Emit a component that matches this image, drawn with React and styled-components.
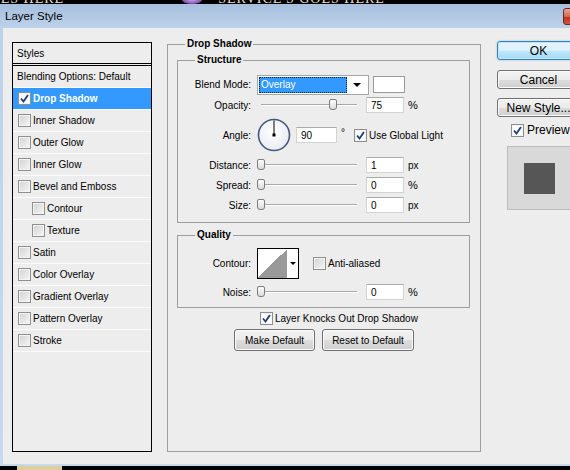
import React from "react";
import styled, { createGlobalStyle } from "styled-components";

const GlobalStyle = createGlobalStyle`
  *, *::before, *::after { box-sizing: border-box; }
  html, body { margin: 0; padding: 0; background: #000; }
  body { font-family: "Liberation Sans", Arial, sans-serif; font-size: 10px; color: #000; }
  #root { width: 570px; height: 470px; overflow: hidden; }
`;

const Screen = styled.div`
  width: 570px;
  height: 470px;
  overflow: hidden;
  background: #000;
  display: flex;
  flex-direction: column;
`;

const Strip = styled.div`
  height: 4px;
  flex: none;
  overflow: hidden;
  display: flex;
  align-items: flex-end;
`;

const StripText = styled.span`
  font-family: "Liberation Serif", serif;
  font-size: 14px;
  line-height: 10px;
  letter-spacing: 1px;
  color: #e6dfc9;
  white-space: nowrap;
  flex: none;
  margin-left: ${(p) => p.$ml}px;
`;

const Orb = styled.span`
  width: 20px;
  height: 9px;
  flex: none;
  border-radius: 50%;
  background: radial-gradient(#c8a8f0, #5b2b8c);
  margin-left: ${(p) => p.$ml}px;
`;

const Patch = styled.span`
  width: 45px;
  height: 4px;
  flex: none;
  background: #dccf9a;
  margin-left: ${(p) => p.$ml}px;
`;

const Window = styled.div`
  width: 611px;
  height: 462px;
  flex: none;
  display: flex;
  flex-direction: column;
  background: linear-gradient(to bottom, #a6bfdd 0px, #bdd2ea 24px, #c6d9ee 100%);
`;

const TitleBar = styled.div`
  height: 24px;
  flex: none;
  display: flex;
  align-items: flex-start;
  padding-left: 5px;
`;

const Title = styled.div`
  flex: 1;
  font-size: 11.5px;
  line-height: 24px;
`;

const CloseBtn = styled.div`
  width: 43px;
  height: 17px;
  flex: none;
  margin: 4px 5px 0 0;
  border: 1px solid #6c2b21;
  border-radius: 3px;
  background: linear-gradient(#eaa797, #d5664e 50%, #b8321c 51%, #cc5740);
`;

const Body = styled.div`
  flex: 1;
  margin: 0 3px 2px;
  background: #ededed;
  display: flex;
  align-items: flex-start;
  padding: 10px 0 0 9px;
`;

const StylesPanel = styled.div`
  width: 140px;
  height: 410px;
  flex: none;
  margin-top: 4px;
  border: 1px solid #000;
  display: flex;
  flex-direction: column;
`;

const PanelHeader = styled.div`
  height: 23px;
  border-bottom: 3px double #000;
  padding-left: 4px;
  display: flex;
  align-items: center;
`;

const StyleRow = styled.div`
  height: 22px;
  flex: none;
  border-bottom: 1px solid #fbfbfb;
  display: flex;
  align-items: center;
  gap: 2px;
  padding-left: ${(p) => p.$indent}px;
  background: ${(p) => (p.$active ? "#3399ff" : "transparent")};
  color: ${(p) => (p.$active ? "#fff" : "#000")};
  font-weight: ${(p) => (p.$active ? "bold" : "normal")};
`;

const BoxEl = styled.span`
  width: 13px;
  height: 13px;
  flex: none;
  border: 1px solid #8e8f8f;
  background: ${(p) =>
    p.$checked ? "#fff" : "linear-gradient(135deg, #d2d2d2, #f6f6f6)"};
  box-shadow: inset 0 0 0 1px #f4f4f4;
  display: flex;
  align-items: center;
  justify-content: center;
  margin-left: ${(p) => p.$ml || 0}px;
`;

const Check = ({ checked, ml }) => (
  <BoxEl $checked={checked} $ml={ml}>
    {checked && (
      <svg width="11" height="11" viewBox="0 0 11 11">
        <path d="M2 5.5 L4.5 8.5 L9 2" fill="none" stroke="#1f3f7a" strokeWidth="1.9" />
      </svg>
    )}
  </BoxEl>
);

const Group = styled.fieldset`
  margin: ${(p) => p.$mt || 0}px 0 0 ${(p) => p.$ml || 0}px;
  padding: 0 ${(p) => p.$pr || 0}px ${(p) => p.$pb || 0}px ${(p) => p.$pl || 0}px;
  border: 1px solid #9d9d9d;
  min-width: 0;
  flex: none;
  width: ${(p) => (p.$w ? p.$w + "px" : "auto")};
  height: ${(p) => (p.$h ? p.$h + "px" : "auto")};
`;

const Legend = styled.legend`
  font-weight: bold;
  font-size: 10px;
  line-height: 12px;
  padding: 0 2px;
  margin-left: ${(p) => p.$ml}px;
`;

const Rows = styled.div`
  display: flex;
  flex-direction: column;
  padding-top: ${(p) => p.$pt}px;
`;

const FormRow = styled.div`
  height: ${(p) => p.$h}px;
  display: flex;
  align-items: center;
  padding-left: ${(p) => p.$pl || 0}px;
  gap: ${(p) => p.$gap || 0}px;
`;

const Label = styled.span`
  width: 73px;
  flex: none;
  text-align: right;
  margin-right: 6px;
`;

const Select = styled.div`
  width: 112px;
  height: 20px;
  flex: none;
  border: 1px solid #a6a6a6;
  background: #fff;
  display: flex;
  align-items: stretch;
  padding: 1px;
`;

const SelectValue = styled.div`
  flex: 1;
  background: #3399ff;
  color: #fff;
  border: 1px dotted #0a2850;
  padding-left: 1px;
  display: flex;
  align-items: center;
`;

const SelectArrow = styled.div`
  width: 20px;
  flex: none;
  display: flex;
  align-items: center;
  justify-content: center;
  &::after {
    content: "";
    border-left: 4px solid transparent;
    border-right: 4px solid transparent;
    border-top: 4px solid #000;
  }
`;

const Swatch = styled.div`
  width: 32px;
  height: 17px;
  margin-left: 4px;
  background: #fff;
  border: 1px solid #9a9a9a;
`;

const SliderBox = styled.div`
  position: relative;
  width: 100px;
  height: 12px;
  flex: none;
  &::before {
    content: "";
    position: absolute;
    left: 4px;
    right: 0;
    top: 5px;
    height: 2px;
    border-top: 1px solid #a9a9a9;
    border-bottom: 1px solid #fff;
  }
`;

const Thumb = styled.span`
  position: absolute;
  top: 0;
  width: 8px;
  height: 11px;
  border: 1px solid #7c7c7c;
  border-radius: 2px 2px 3px 3px;
  background: linear-gradient(#fdfdfd, #dadada);
`;

const Slider = ({ value }) => (
  <SliderBox>
    <Thumb style={{ left: `${Math.round(value * 0.96)}px` }} />
  </SliderBox>
);

const NumInput = styled.div`
  width: ${(p) => p.$w || 38}px;
  height: 16px;
  flex: none;
  margin-left: ${(p) => p.$ml ?? 9}px;
  background: #fff;
  border: 1px solid #d3d3d3;
  border-top-color: #ababab;
  padding-left: 4px;
  display: flex;
  align-items: center;
`;

const Unit = styled.span`
  margin-left: 4px;
  font-size: ${(p) => (p.$px ? 10 : 11)}px;
`;

const Degree = styled.span`
  margin-left: 4px;
  align-self: flex-start;
  margin-top: 12px;
  font-size: 10px;
`;

const Text = styled.span`
  margin-left: ${(p) => p.$ml || 0}px;
  white-space: nowrap;
`;

const Contour = styled.div`
  width: 42px;
  height: 31px;
  flex: none;
  border: 1px solid #000;
  background: #fff;
  display: flex;
`;

const ContourCurve = styled.div`
  width: 29px;
  background: linear-gradient(to bottom right, #fff 50%, #999 50%);
`;

const ContourArrow = styled.div`
  flex: 1;
  display: flex;
  align-items: center;
  justify-content: center;
  &::after {
    content: "";
    border-left: 3px solid transparent;
    border-right: 3px solid transparent;
    border-top: 3px solid #000;
  }
`;

const Button = styled.div`
  width: ${(p) => p.$w}px;
  height: ${(p) => p.$h || 22}px;
  flex: none;
  margin-top: ${(p) => p.$mt || 0}px;
  border: 1px solid ${(p) => (p.$default ? "#3c7fb1" : "#707070")};
  border-radius: 3px;
  background: ${(p) =>
    p.$default
      ? "linear-gradient(#eaf6fd, #d9f0fc 50%, #bee6fd 51%, #a7d9f5)"
      : "linear-gradient(#f2f2f2, #ebebeb 50%, #dddddd 51%, #cfcfcf)"};
  box-shadow: ${(p) =>
    p.$default ? "inset 0 0 0 1px #bfe6fa, 0 0 2px #6fc6f2" : "inset 0 0 0 1px #fbfbfb"};
  font-size: ${(p) => p.$fs || 10}px;
  display: flex;
  align-items: center;
  justify-content: center;
  white-space: nowrap;
`;

const Dial = () => (
  <svg width="34" height="34" viewBox="0 0 34 34" style={{ flex: "none" }}>
    <defs>
      <radialGradient id="dg" cx="0.45" cy="0.4" r="0.6">
        <stop offset="0" stopColor="#ffffff" />
        <stop offset="1" stopColor="#e8ecf2" />
      </radialGradient>
    </defs>
    <circle cx="17" cy="17" r="15.5" fill="url(#dg)" stroke="#44577c" strokeWidth="1.6" />
    <line x1="17" y1="17.5" x2="17" y2="2.5" stroke="#000" strokeWidth="1" />
    <rect x="15.5" y="15.5" width="3" height="3" fill="#000" />
  </svg>
);

const RightCol = styled.div`
  width: 83px;
  flex: none;
  margin: 3px 0 0 16px;
  display: flex;
  flex-direction: column;
`;

const PreviewRow = styled.div`
  height: 20px;
  margin-top: 3px;
  padding-left: 14px;
  display: flex;
  align-items: center;
  gap: 3px;
  font-size: 12px;
`;

const PreviewBox = styled.div`
  width: 65px;
  height: 64px;
  margin: 6px 0 0 10px;
  background: #d9d9d9;
  border: 1px solid #bcbcbc;
  display: flex;
  align-items: center;
  justify-content: center;
`;

const PreviewSquare = styled.div`
  width: 31px;
  height: 31px;
  background: #565656;
`;

const styleItems = [
  { label: "Drop Shadow", checked: true, active: true },
  { label: "Inner Shadow" },
  { label: "Outer Glow" },
  { label: "Inner Glow" },
  { label: "Bevel and Emboss" },
  { label: "Contour", sub: true },
  { label: "Texture", sub: true },
  { label: "Satin" },
  { label: "Color Overlay" },
  { label: "Gradient Overlay" },
  { label: "Pattern Overlay" },
  { label: "Stroke" },
];

export default function App() {
  return (
    <Screen>
      <GlobalStyle />
      <Strip>
        <StripText $ml={-8}>SES HERE</StripText>
        <Orb $ml={118} />
        <StripText $ml={16}>SERVICE'S GOES HERE</StripText>
      </Strip>
      <Window>
        <TitleBar>
          <Title>Layer Style</Title>
          <CloseBtn />
        </TitleBar>
        <Body>
          <StylesPanel>
            <PanelHeader>Styles</PanelHeader>
            <StyleRow $indent={4}>Blending Options: Default</StyleRow>
            {styleItems.map((it) => (
              <StyleRow key={it.label} $indent={it.sub ? 19 : 5} $active={it.active}>
                <Check checked={it.checked} />
                <Text>{it.label}</Text>
              </StyleRow>
            ))}
          </StylesPanel>

          <Group $ml={15} $w={314} $h={414} $pl={9} $pr={10}>
            <Legend $ml={8}>Drop Shadow</Legend>
            <Group $mt={4} $pb={7}>
              <Legend $ml={17}>Structure</Legend>
              <Rows $pt={8}>
                <FormRow $h={21}>
                  <Label>Blend Mode:</Label>
                  <Select>
                    <SelectValue>Overlay</SelectValue>
                    <SelectArrow />
                  </Select>
                  <Swatch />
                </FormRow>
                <FormRow $h={20}>
                  <Label>Opacity:</Label>
                  <Slider value={75} />
                  <NumInput>75</NumInput>
                  <Unit>%</Unit>
                </FormRow>
                <FormRow $h={40}>
                  <Label>Angle:</Label>
                  <Dial />
                  <NumInput $ml={5} $w={41}>90</NumInput>
                  <Degree>°</Degree>
                  <Check checked ml={9} />
                  <Text $ml={2}>Use Global Light</Text>
                </FormRow>
                <FormRow $h={20}>
                  <Label>Distance:</Label>
                  <Slider value={0} />
                  <NumInput>1</NumInput>
                  <Unit $px>px</Unit>
                </FormRow>
                <FormRow $h={20}>
                  <Label>Spread:</Label>
                  <Slider value={0} />
                  <NumInput>0</NumInput>
                  <Unit>%</Unit>
                </FormRow>
                <FormRow $h={20}>
                  <Label>Size:</Label>
                  <Slider value={0} />
                  <NumInput>0</NumInput>
                  <Unit $px>px</Unit>
                </FormRow>
              </Rows>
            </Group>

            <Group $mt={6} $pb={3}>
              <Legend $ml={17}>Quality</Legend>
              <Rows $pt={5}>
                <FormRow $h={34}>
                  <Label>Contour:</Label>
                  <Contour>
                    <ContourCurve />
                    <ContourArrow />
                  </Contour>
                  <Check ml={14} />
                  <Text $ml={2}>Anti-aliased</Text>
                </FormRow>
                <FormRow $h={24}>
                  <Label>Noise:</Label>
                  <Slider value={0} />
                  <NumInput>0</NumInput>
                  <Unit>%</Unit>
                </FormRow>
              </Rows>
            </Group>

            <FormRow $h={21} $pl={83} $gap={2}>
              <Check checked />
              <Text>Layer Knocks Out Drop Shadow</Text>
            </FormRow>
            <FormRow $h={22} $pl={57} $gap={7}>
              <Button $w={81}>Make Default</Button>
              <Button $w={92}>Reset to Default</Button>
            </FormRow>
          </Group>

          <RightCol>
            <Button $w={83} $h={19} $fs={12} $default>OK</Button>
            <Button $w={83} $h={19} $fs={12} $mt={10}>Cancel</Button>
            <Button $w={83} $h={19} $fs={12} $mt={9}>New Style...</Button>
            <PreviewRow>
              <Check checked />
              <Text>Preview</Text>
            </PreviewRow>
            <PreviewBox>
              <PreviewSquare />
            </PreviewBox>
          </RightCol>
        </Body>
      </Window>
      <Strip>
        <Patch $ml={17} />
      </Strip>
    </Screen>
  );
}
